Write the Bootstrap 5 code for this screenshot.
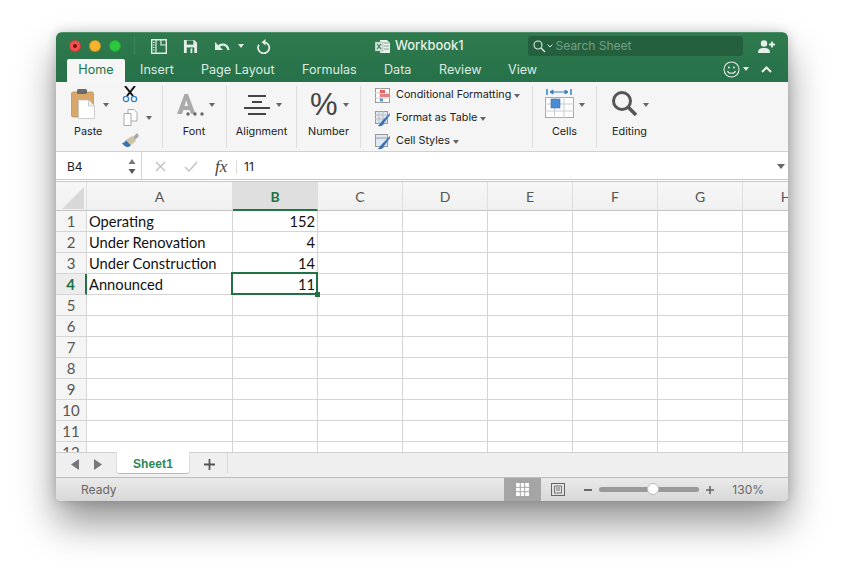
<!DOCTYPE html>
<html lang="en"><head><meta charset="utf-8"><title>Workbook1</title>
<link href="https://cdn.jsdelivr.net/npm/bootstrap@5.3.0/dist/css/bootstrap.min.css" rel="stylesheet">
<style>
html,body{margin:0;height:581px;overflow:hidden;background:#fff}
body{font-family:"Inter","Liberation Sans",sans-serif;padding:32px 56px 0}
svg{display:block;flex:none}
.xl-win{width:732px;height:469px;border-radius:6px 6px 5px 5px;overflow:hidden;box-shadow:0 22px 38px rgba(0,0,0,.42),0 0 12px rgba(0,0,0,.18);background:#fff}
.xl-top{height:50px;background:linear-gradient(#2f7a4d,#27714a);color:#d9e8df;border-top:1px solid #4d8d68}
.xl-title{height:26px}
.light{width:12px;height:12px;border-radius:50%;margin-right:8px;border:1px solid rgba(0,0,0,.18)}
.l-r{background:#f4504c;margin-left:13px;position:relative}
.l-r::after{content:"";position:absolute;left:3px;top:3px;width:4px;height:4px;border-radius:50%;background:#6f1512}
.l-y{background:#f7b52f}.l-g{background:#2ec840}
.xl-name{font-size:12.9px;font-weight:500;color:#e4efe8;margin-left:5px}
.xl-search{width:215px;height:20px;background:#25603e;border-radius:3px;font-size:12px;color:#74a088;padding-left:5px;margin-left:64px}
.xl-tabs{height:23px;font-size:12.6px}
.xl-tab{height:22px;line-height:22px;color:#dcebe2}
.xl-tab-on{width:58px;height:23px;margin:0 14px 0 11px;background:#f6f6f6;color:#227447;border-radius:2px 2px 0 0;text-align:center;line-height:22px}
.xl-rib{height:70px;background:#f5f5f5;border-bottom:1px solid #d0d0d0;font-size:10.8px;color:#222}
.rg{height:62px;margin-top:4px;border-right:1px solid #dddddd;position:relative}
.rlabel{position:absolute;top:39px;left:0;right:0;text-align:center;line-height:14px}
.caret-d{width:0;height:0;border:3px solid transparent;border-top:4px solid #666;border-bottom:0}
.rico{position:absolute}
.rlist{margin-top:-2px}
.rline{height:23px;padding-left:14px;gap:6px;white-space:nowrap}
.xl-fbar{height:28px;background:#fff;border-bottom:1px solid #c9c9c9;font-size:12px;color:#222;padding-top:2px}
.xl-namebox{width:86px;height:27px;margin-top:-2px;border-right:1px solid #d4d4d4;padding:2px 5px 0 11px;background:#fff}
.xl-fx{margin-left:17px;font:italic 17px "Liberation Serif",serif;color:#444;width:21px;line-height:20px}
.xl-sheet{overflow:hidden;border-top:1px solid #c9c9c9;margin-top:1px;font-family:"Lato",sans-serif;min-height:0}
.xl-tbl{border-collapse:separate;border-spacing:0;table-layout:fixed;width:774px;font-size:14.7px;color:#111}
.xl-tbl td,.xl-tbl th{height:21px;padding:1px 2px 0 2px;border-right:1px solid #d5d5d5;border-bottom:1px solid #d5d5d5;line-height:19px;white-space:nowrap;overflow:hidden}
.xl-tbl thead th{height:29px;padding-top:1px;background:linear-gradient(#f7f7f7,#f0f0f0);font-weight:400;text-align:center;color:#555;font-size:14px;border-bottom:1px solid #c4c4c4;border-right-color:#dedede}
.xl-tbl thead th.on{background:#dfdfdf;color:#217346;font-weight:700;border-bottom:2px solid #217346}
.xl-tbl tbody th{background:#f5f5f5;font-weight:400;text-align:center;color:#555;font-size:15px;padding:1px 0 0}
.xl-tbl tbody th.on{color:#217346;font-weight:700;background:#ececec;border-right:2px solid #217346}
.xl-tbl .num{text-align:right}
.xl-sel{position:relative;overflow:visible!important}
.xl-sel::after{content:"";position:absolute;left:-2px;top:-2px;right:-1px;bottom:-1px;border:2px solid #217346}
.xl-handle{position:absolute;right:-3px;bottom:-3px;width:5px;height:5px;background:#217346;z-index:2}
.corner{width:0;height:0;margin-left:auto;border-left:22px solid transparent;border-bottom:22px solid #d8d8d8}
.xl-tbl thead th.xl-corner{padding:4px 2px 0 0}
.xl-tabsbar{height:26px;background:#efefef;border-top:1px solid #cfcfcf;border-bottom:1px solid #bdbdbd}
.xl-sheet-tab{width:72px;height:22px;background:#fff;color:#2f8656;font-weight:700;font-size:12px;text-align:center;line-height:24px;margin-top:-1px;border-radius:0 0 3px 3px;border-bottom:1px solid #bbb;box-shadow:1px 0 0 #ddd,-1px 0 0 #ddd;font-family:"Liberation Sans",sans-serif;letter-spacing:.1px}
.xl-status{height:23px;background:linear-gradient(#e9e9e9,#d8d8d8);font-size:12px;color:#666}
.xl-view-on{width:37px;height:23px;background:#a5a5a5}
.xl-view{width:34px;height:23px}
.xl-slider{width:100px;height:5px;background:#999;border-radius:3px;position:relative;margin:0 7px}
.xl-knob{position:absolute;left:48px;top:-4px;width:12px;height:12px;border-radius:50%;background:#fff;border:1px solid #bbb}
</style></head>
<body>
<div class="xl-win d-flex flex-column">
 <div class="xl-top flex-shrink-0">
  <div class="xl-title d-flex align-items-center">
   <span class="light l-r"></span><span class="light l-y"></span><span class="light l-g"></span>
   <svg width="1" height="18" style="margin-left:5px"><rect width="1" height="18" fill="#3d8a5e"/></svg>
   <svg width="16" height="15" viewBox="0 0 16 15" style="margin-left:16px"><path d="M.7.7h14.600v13.600H.7z" fill="none" stroke="#e3ede7" stroke-width="1.400"/><path d="M5 1v13" stroke="#e3ede7" stroke-width="1.200"/><path d="M2 3.500h1.600M2 6h1.600M2 8.500h1.600M2 11h1.600" stroke="#e3ede7"/><path d="M10 1v5h5" fill="none" stroke="#e3ede7" stroke-width="1.200"/></svg>
   <svg width="15" height="15" viewBox="0 0 16 16" style="margin-left:16px"><path d="M1 1h11l3 3v11H1z" fill="#e3ede7"/><rect x="4" y="1.500" width="7" height="4.500" fill="#2b754b"/><rect x="4" y="9" width="8" height="6" fill="#2b754b"/><rect x="8" y="10" width="2" height="5" fill="#e3ede7"/></svg>
   <svg width="16" height="13" viewBox="0 0 16 13" style="margin-left:16px"><path d="M1 2v8h8z" fill="#e3ede7"/><path d="M4.500 6.500C7 3.500 13 3.500 14.500 10" fill="none" stroke="#e3ede7" stroke-width="2.200"/></svg>
   <span class="caret-d" style="margin-left:8px;border-top-color:#dfeae3"></span>
   <svg width="14" height="15" viewBox="0 0 14 15" style="margin-left:13px"><path d="M1.900 5.800A5.600 5.600 0 1 0 8 3.300" fill="none" stroke="#e3ede7" stroke-width="1.800"/><path d="M8.500 0v6.500L4.500 3.300z" fill="#e3ede7"/></svg>
   <svg width="15" height="15" viewBox="0 0 15 15" style="margin-left:104px"><path d="M5 1h7l3 3v10H5z" fill="#e6efe9"/><path d="M9 4h5M9 7h5M9 10h5" stroke="#8aa897"/><rect y="3" width="8" height="9" fill="#d6e2db" stroke="#8aa897" stroke-width=".5"/><path d="M2 5l4 5M6 5l-4 5" stroke="#2f7a4d" stroke-width="1.200"/></svg>
   <span class="xl-name">Workbook1</span>
   <div class="xl-search d-flex align-items-center">
    <svg width="13" height="13" viewBox="0 0 13 13"><circle cx="5" cy="5" r="4" fill="none" stroke="#e3ede7" stroke-width="1.100"/><path d="M8 8l4 4" stroke="#e3ede7" stroke-width="1.300"/></svg>
    <svg width="6" height="4" viewBox="0 0 6 4" style="margin:0 3px 0 1px"><path d="M.5.5L3 3 5.500.5" fill="none" stroke="#e3ede7"/></svg>Search Sheet</div>
   <svg width="18" height="13" viewBox="0 0 18 13" class="ms-auto" style="margin-right:12px"><circle cx="6" cy="3.500" r="3.200" fill="#e8f0eb"/><path d="M0 13c0-4 2-5 6-5s6 1 6 5z" fill="#e8f0eb"/><path d="M11 4.500h6M14 1.500v6" stroke="#e8f0eb" stroke-width="1.800"/></svg>
  </div>
  <div class="xl-tabs d-flex">
   <div class="xl-tab-on">Home</div>
   <div class="xl-tab" style="margin-left:1px;width:61px">Insert</div>
   <div class="xl-tab" style="width:75px">Page Layout</div>
   <div class="xl-tab" style="margin-left:26px;width:82px">Formulas</div>
   <div class="xl-tab" style="width:55px">Data</div>
   <div class="xl-tab" style="width:69px">Review</div>
   <div class="xl-tab">View</div>
   <div class="ms-auto d-flex align-items-center" style="margin-right:16px;margin-top:-3px">
    <svg width="17" height="17" viewBox="0 0 17 17"><circle cx="8.500" cy="8.500" r="7.500" fill="none" stroke="#e3ede7" stroke-width="1.100"/><circle cx="6" cy="6.500" r="1" fill="#e3ede7"/><circle cx="11" cy="6.500" r="1" fill="#e3ede7"/><path d="M4.500 10c1 3 7 3 8 0" fill="none" stroke="#e3ede7" stroke-width="1.100"/></svg>
    <span class="caret-d" style="margin:0 12px 0 3px;border-top-color:#dfeae3"></span>
    <svg width="11" height="7" viewBox="0 0 11 7"><path d="M1 6l4.500-4.500L10 6" fill="none" stroke="#e8f0eb" stroke-width="2"/></svg>
   </div>
  </div>
 </div>

 <div class="xl-rib d-flex flex-shrink-0">
  <div class="rg" style="width:107px">
   <svg class="rico" style="left:15px;top:3px" width="24" height="30" viewBox="0 0 24 30"><rect x=".5" y="3" width="22" height="25" rx="1.500" fill="#d9a76a" stroke="#b98a52" stroke-width=".7"/><rect x="6" y="0" width="10" height="5" rx="1.500" fill="#6a6a6a"/><path d="M7.500 11h10l6 6v12.500h-16z" fill="#fff" stroke="#bbb" stroke-width=".7"/><path d="M17.500 11v6h6" fill="#eee" stroke="#bbb" stroke-width=".7"/></svg>
   <span class="caret-d rico" style="left:47px;top:17px"></span>
   <svg class="rico" style="left:66px;top:0" width="16" height="17" viewBox="0 0 16 17"><path d="M3 0l8 10M13 0L5 10" stroke="#111" stroke-width="2"/><circle cx="4" cy="13" r="2.600" fill="none" stroke="#3a7fc4" stroke-width="1.300"/><circle cx="12" cy="13" r="2.600" fill="none" stroke="#3a7fc4" stroke-width="1.300"/></svg>
   <svg class="rico" style="left:67px;top:23px" width="15" height="17" viewBox="0 0 15 17"><path d="M5 .5h6l3 3V12H5z" fill="#fff" stroke="#aaa"/><path d="M1 4.500h7v12H1z" fill="#fff" stroke="#aaa"/></svg>
   <span class="caret-d rico" style="left:90px;top:30px"></span>
   <svg class="rico" style="left:66px;top:47px" width="17" height="15" viewBox="0 0 17 15"><path d="M0 10c2 0 3-1 4-3l5 5c-2 3-6 3-9-2z" fill="#3a72b5"/><path d="M4 7l6-4 4 5-5 4z" fill="#cfc3a4"/><path d="M11 4l4-4 2 3-4 4z" fill="#a8a8a8"/></svg>
   <div class="rlabel" style="right:auto;left:18px">Paste</div>
  </div>
  <div class="rg" style="width:64px">
   <svg class="rico" style="left:14px;top:8px" width="27" height="22" viewBox="0 0 27 22"><path d="M0 20L7.500 0h3.500l7.500 20h-4.500l-1.500-4h-6L5 20zM7.500 12h3.500L9.200 6z" fill="#aaa"/><circle cx="11" cy="20" r="1.700" fill="#666"/><circle cx="18" cy="20" r="1.700" fill="#666"/><circle cx="25" cy="20" r="1.700" fill="#666"/></svg>
   <span class="caret-d rico" style="left:46px;top:17px"></span>
   <div class="rlabel" style="right:1px">Font</div>
  </div>
  <div class="rg" style="width:70px">
   <svg class="rico" style="left:17px;top:9px" width="26" height="22" viewBox="0 0 26 22"><path d="M4 1h18M8 7h10M0 13h26M4 19h18" stroke="#444" stroke-width="2"/></svg>
   <span class="caret-d rico" style="left:49px;top:17px"></span>
   <div class="rlabel">Alignment</div>
  </div>
  <div class="rg" style="width:64px">
   <div class="rico" style="left:13px;top:2px;font-size:31px;line-height:34px;color:#444;font-family:'Liberation Sans',sans-serif">%</div>
   <span class="caret-d rico" style="left:46px;top:17px"></span>
   <div class="rlabel">Number</div>
  </div>
  <div class="rg" style="width:172px">
   <div class="rlist">
   <div class="rline d-flex align-items-center">
    <svg width="15" height="15" viewBox="0 0 15 15"><rect x=".5" y=".5" width="14" height="14" fill="#fff" stroke="#999"/><path d="M0 5h15M0 10h15M5 0v15" stroke="#ccc"/><rect x="5" y="2" width="5" height="3" fill="#e86060"/><rect x="5" y="6" width="9" height="3" fill="#e08080"/><rect x="5" y="10.500" width="3" height="3" fill="#5a94d0"/></svg>
    <span>Conditional Formatting</span><span class="caret-d" style="margin-left:-3px"></span></div>
   <div class="rline d-flex align-items-center">
    <svg width="15" height="16" viewBox="0 0 15 16"><rect x=".5" y=".5" width="12" height="12" fill="#dfe9f5" stroke="#999"/><path d="M0 4h13M0 8h13M4 0v13M8 0v13" stroke="#bbb"/><path d="M15 2L7 10l-4 5c3 1 6-1 6-3l6-8z" fill="#3a72b5"/></svg>
    <span>Format as Table</span><span class="caret-d" style="margin-left:-3px"></span></div>
   <div class="rline d-flex align-items-center">
    <svg width="15" height="16" viewBox="0 0 15 16"><rect x=".5" y=".5" width="12" height="12" fill="#dfe9f5" stroke="#999"/><path d="M0 4h13" stroke="#999"/><path d="M15 2L7 10l-4 5c3 1 6-1 6-3l6-8z" fill="#3a72b5"/></svg>
    <span>Cell Styles</span><span class="caret-d" style="margin-left:-3px"></span></div>
   </div>
  </div>
  <div class="rg" style="width:64px">
   <svg class="rico" style="left:12px;top:2px" width="30" height="30" viewBox="0 0 30 30"><path d="M2 1v6M26 1v6" stroke="#3a7fc4" stroke-width="1.500"/><path d="M5 4h18M8 2L5 4l3 2zM20 2l3 2-3 2z" stroke="#3a7fc4" fill="#3a7fc4"/><rect x=".5" y="9.500" width="28" height="20" fill="#fff" stroke="#aaa"/><path d="M0 16h29M0 23h29M9.500 9v21M19 9v21" stroke="#ccc"/><rect x="6" y="11" width="9" height="9" fill="#4a8ad0" stroke="#3a72b5" stroke-width=".6"/></svg>
   <span class="caret-d rico" style="left:46px;top:17px"></span>
   <div class="rlabel">Cells</div>
  </div>
  <div class="rg border-0" style="width:65px">
   <svg class="rico" style="left:14px;top:4px" width="27" height="27" viewBox="0 0 27 27"><circle cx="11" cy="11" r="8.500" fill="none" stroke="#555" stroke-width="3"/><path d="M17 17l8 8" stroke="#555" stroke-width="3.500"/></svg>
   <span class="caret-d rico" style="left:46px;top:17px"></span>
   <div class="rlabel">Editing</div>
  </div>
 </div>

 <div class="xl-fbar d-flex align-items-center flex-shrink-0">
  <div class="xl-namebox d-flex align-items-center justify-content-between"><span>B4</span>
   <svg width="8" height="19" viewBox="0 0 8 19"><path d="M4 2l3.500 5h-7z" fill="#777"/><path d="M4 17l3.500-5h-7z" fill="#555"/></svg></div>
  <svg width="11" height="11" viewBox="0 0 11 11" style="margin-left:13px"><path d="M1 1l9 9M10 1l-9 9" stroke="#c5c5c5" stroke-width="1.600"/></svg>
  <svg width="14" height="11" viewBox="0 0 14 11" style="margin-left:18px"><path d="M1 6l4 4 8-9" fill="none" stroke="#c5c5c5" stroke-width="1.600"/></svg>
  <span class="xl-fx">fx</span>
  <svg width="1" height="14" style="margin:0 7px 0 0"><rect width="1" height="14" fill="#ddd"/></svg>
  <span>11</span>
  <span class="caret-d ms-auto" style="margin-right:3px;border-width:4px;border-top-width:5px;border-bottom-width:0"></span>
 </div>

 <div class="xl-sheet flex-grow-1">
  <table class="xl-tbl">
   <colgroup><col style="width:31px"><col style="width:146px"><col style="width:85px"><col style="width:85px"><col style="width:85px"><col style="width:85px"><col style="width:85px"><col style="width:85px"><col style="width:87px"></colgroup>
   <thead><tr><th class="xl-corner"><div class="corner"></div></th><th>A</th><th class="on">B</th><th>C</th><th>D</th><th>E</th><th>F</th><th>G</th><th>H</th></tr></thead>
   <tbody>
   <tr><th>1</th><td>Operating</td><td class="num">152</td><td></td><td></td><td></td><td></td><td></td><td></td></tr>
   <tr><th>2</th><td>Under Renovation</td><td class="num">4</td><td></td><td></td><td></td><td></td><td></td><td></td></tr>
   <tr><th>3</th><td>Under Construction</td><td class="num">14</td><td></td><td></td><td></td><td></td><td></td><td></td></tr>
   <tr><th class="on">4</th><td>Announced</td><td class="num xl-sel">11<span class="xl-handle"></span></td><td></td><td></td><td></td><td></td><td></td><td></td></tr>
   <tr><th>5</th><td></td><td></td><td></td><td></td><td></td><td></td><td></td><td></td></tr>
   <tr><th>6</th><td></td><td></td><td></td><td></td><td></td><td></td><td></td><td></td></tr>
   <tr><th>7</th><td></td><td></td><td></td><td></td><td></td><td></td><td></td><td></td></tr>
   <tr><th>8</th><td></td><td></td><td></td><td></td><td></td><td></td><td></td><td></td></tr>
   <tr><th>9</th><td></td><td></td><td></td><td></td><td></td><td></td><td></td><td></td></tr>
   <tr><th>10</th><td></td><td></td><td></td><td></td><td></td><td></td><td></td><td></td></tr>
   <tr><th>11</th><td></td><td></td><td></td><td></td><td></td><td></td><td></td><td></td></tr>
   <tr><th>12</th><td></td><td></td><td></td><td></td><td></td><td></td><td></td><td></td></tr>
   </tbody>
  </table>
 </div>

 <div class="xl-tabsbar d-flex align-items-start flex-shrink-0">
  <svg width="10" height="11" viewBox="0 0 10 11" style="margin:6px 0 0 15px"><path d="M8 0v11L0 5.500z" fill="#777"/></svg>
  <svg width="10" height="11" viewBox="0 0 10 11" style="margin:6px 14px 0 12px"><path d="M1 0v11l8-5.500z" fill="#777"/></svg>
  <div class="xl-sheet-tab">Sheet1</div>
  <svg width="11" height="11" viewBox="0 0 11 11" style="margin:6px 0 0 15px"><path d="M5.500 0v11M0 5.500h11" stroke="#555" stroke-width="1.800"/></svg>
  <svg width="1" height="20" style="margin-left:12px"><rect width="1" height="20" fill="#d8d8d8"/></svg>
 </div>

 <div class="xl-status d-flex align-items-center flex-shrink-0">
  <span style="margin-left:25px">Ready</span>
  <div class="xl-view-on d-flex align-items-center justify-content-center ms-auto"><svg width="13" height="13" viewBox="0 0 13 13"><rect width="13" height="13" fill="#fff"/><path d="M4.300 0v13M8.700 0v13M0 4.300h13M0 8.700h13" stroke="#a5a5a5"/></svg></div>
  <div class="xl-view d-flex align-items-center justify-content-center"><svg width="14" height="13" viewBox="0 0 14 13"><rect x=".5" y=".5" width="13" height="12" fill="none" stroke="#666"/><path d="M3.500 3h7v7h-7zM5 5h4M5 7h4" fill="none" stroke="#777"/></svg></div>
  <svg width="8" height="2" viewBox="0 0 8 2" style="margin-left:9px"><rect width="8" height="2" fill="#666"/></svg>
  <div class="xl-slider"><span class="xl-knob"></span></div>
  <svg width="8" height="8" viewBox="0 0 9 9"><path d="M4.500 0v9M0 4.500h9" stroke="#666" stroke-width="1.800"/></svg>
  <span style="margin:0 24px 0 18px">130%</span>
 </div>
</div>
<script src="https://cdn.jsdelivr.net/npm/bootstrap@5.3.0/dist/js/bootstrap.bundle.min.js"></script>
</body></html>
